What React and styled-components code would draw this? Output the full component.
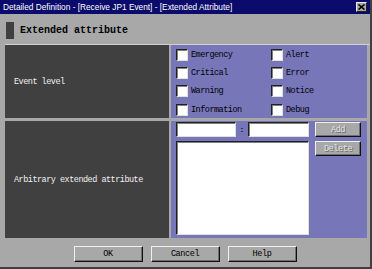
import React from "react";
import styled, { createGlobalStyle } from "styled-components";

const GlobalStyle = createGlobalStyle`
  html, body {
    margin: 0;
    padding: 0;
    background: #a8a8a8;
  }
`;

const Window = styled.div`
  box-sizing: border-box;
  width: 372px;
  height: 269px;
  background: #a8a8a8;
  border-right: 2px solid #404040;
  border-bottom: 2px solid #404040;
  display: flex;
  flex-direction: column;
  font-family: "Liberation Mono", "DejaVu Sans Mono", monospace;
`;

const TitleBar = styled.div`
  height: 14px;
  background: #0b0b6c;
  display: flex;
  align-items: center;
  justify-content: space-between;
  padding: 0 3px 0 3px;
`;

const TitleText = styled.span`
  color: #fff;
  font-family: "Liberation Sans", Arial, sans-serif;
  font-size: 8.3px;
  white-space: nowrap;
`;

const CloseBox = styled.div`
  box-sizing: border-box;
  width: 11px;
  height: 10px;
  background: #a8a8a8;
  border: 1px solid;
  border-color: #e8e8e8 #202020 #202020 #e8e8e8;
  display: flex;
  align-items: center;
  justify-content: center;
`;

const Header = styled.div`
  display: flex;
  align-items: center;
  gap: 6px;
  margin: 8px 0 0 6px;
  height: 17px;
`;

const HeaderMark = styled.div`
  width: 8px;
  height: 17px;
  background: #404040;
`;

const HeaderText = styled.span`
  font-weight: bold;
  font-size: 10px;
  color: #000;
`;

const Table = styled.div`
  display: grid;
  grid-template-columns: 164px 196px;
  grid-template-rows: 73px 117px;
  column-gap: 2px;
  row-gap: 3px;
  margin: 5px 0 0 5px;
  border-top: 1px solid #d0d0d0;
`;

const LabelCell = styled.div`
  background: #404040;
  color: #f0f0f0;
  font-size: 8.5px;
  letter-spacing: -0.5px;
  display: flex;
  align-items: center;
  padding-left: 9px;
`;

const ValueCell = styled.div`
  background: #7776b8;
  padding: ${(p) => p.$pad};
`;

const CheckGrid = styled.div`
  display: grid;
  grid-template-columns: 95px 90px;
  grid-auto-rows: 18.4px;
`;

const CheckItem = styled.label`
  display: flex;
  align-items: center;
  gap: 3px;
  height: 11px;
  font-size: 8.5px;
  letter-spacing: -0.5px;
  color: #000;
`;

const Box = styled.span`
  box-sizing: border-box;
  width: 12px;
  height: 12px;
  background: #fff;
  border: 1px solid;
  border-color: #202020 #e0e0e0 #e0e0e0 #202020;
  box-shadow: inset 1px 1px 0 #808080;
  flex: none;
`;

const AttrGrid = styled.div`
  display: grid;
  grid-template-columns: 133px 46px;
  column-gap: 6px;
`;

const AttrLeft = styled.div`
  display: flex;
  flex-direction: column;
  gap: 4px;
`;

const InputRow = styled.div`
  display: flex;
  align-items: center;
  height: 15px;
`;

const Field = styled.div`
  box-sizing: border-box;
  width: ${(p) => p.$w}px;
  height: ${(p) => p.$h}px;
  background: #fff;
  border: 1px solid;
  border-color: #202020 #e0e0e0 #e0e0e0 #202020;
  box-shadow: inset 1px 1px 0 #808080;
`;

const Colon = styled.span`
  width: 12px;
  text-align: center;
  font-size: 8px;
  font-weight: bold;
  color: #000;
`;

const SideButtons = styled.div`
  display: flex;
  flex-direction: column;
  gap: 4px;
`;

const Button = styled.div`
  box-sizing: border-box;
  width: ${(p) => p.$w}px;
  height: ${(p) => p.$h}px;
  background: #a8a8a8;
  border: 1px solid;
  border-color: #f0f0f0 #101010 #101010 #f0f0f0;
  box-shadow: inset -1px -1px 0 #707070;
  display: flex;
  align-items: center;
  justify-content: center;
  font-size: 8.5px;
  letter-spacing: -0.4px;
  color: ${(p) => (p.$disabled ? "#e4e4e4" : "#000")};
  text-shadow: ${(p) => (p.$disabled ? "1px 1px 0 #6a6a6a" : "none")};
`;

const Footer = styled.div`
  display: flex;
  justify-content: center;
  gap: 8px;
  margin-top: 8px;
`;

const levels = [
  ["Emergency", "Alert"],
  ["Critical", "Error"],
  ["Warning", "Notice"],
  ["Information", "Debug"],
];

export default function App() {
  return (
    <>
      <GlobalStyle />
      <Window>
        <TitleBar>
          <TitleText>
            Detailed Definition - [Receive JP1 Event] - [Extended Attribute]
          </TitleText>
          <CloseBox>
            <svg width="7" height="6" viewBox="0 0 7 6">
              <path d="M0.5 0.5 L6.5 5.5 M6.5 0.5 L0.5 5.5" stroke="#000" strokeWidth="1.6" />
            </svg>
          </CloseBox>
        </TitleBar>

        <Header>
          <HeaderMark />
          <HeaderText>Extended attribute</HeaderText>
        </Header>

        <Table>
          <LabelCell>Event level</LabelCell>
          <ValueCell $pad="4px 0 0 5px">
            <CheckGrid>
              {levels.flat().map((name) => (
                <CheckItem key={name}>
                  <Box />
                  {name}
                </CheckItem>
              ))}
            </CheckGrid>
          </ValueCell>

          <LabelCell>Arbitrary extended attribute</LabelCell>
          <ValueCell $pad="1px 0 0 5px">
            <AttrGrid>
              <AttrLeft>
                <InputRow>
                  <Field $w={60} $h={15} />
                  <Colon>:</Colon>
                  <Field $w={61} $h={15} />
                </InputRow>
                <Field $w={133} $h={94} />
              </AttrLeft>
              <SideButtons>
                <Button $w={46} $h={15} $disabled>Add</Button>
                <Button $w={46} $h={15} $disabled>Delete</Button>
              </SideButtons>
            </AttrGrid>
          </ValueCell>
        </Table>

        <Footer>
          <Button $w={69} $h={16}>OK</Button>
          <Button $w={69} $h={16}>Cancel</Button>
          <Button $w={69} $h={16}>Help</Button>
        </Footer>
      </Window>
    </>
  );
}
